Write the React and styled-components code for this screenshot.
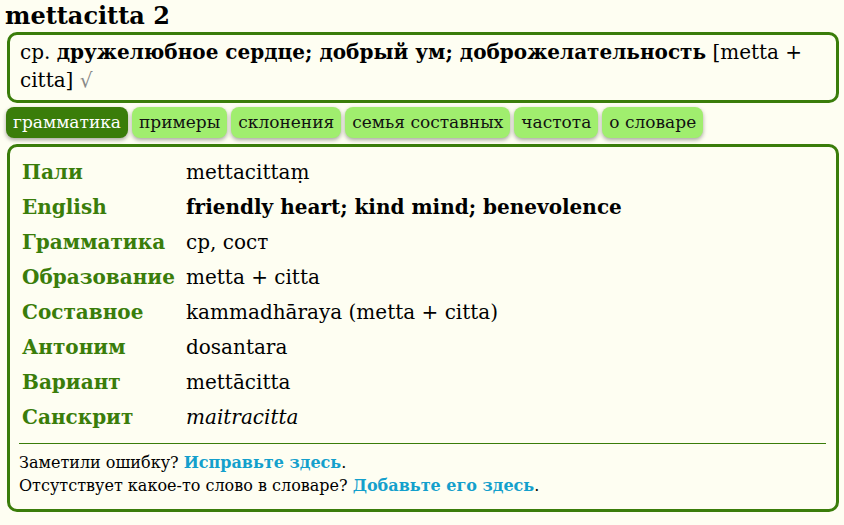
import React from 'react'
import styled, { createGlobalStyle } from 'styled-components'

const green = '#3a7d0a'
const light = '#a0ee6e'
const serif = '"DejaVu Serif", serif'

const Global = createGlobalStyle`
  html, body { background: #fefef2; }
  body {
    margin: 0;
    padding: 0 5px 0 7px;
    font-family: ${serif};
    color: #000;
  }
`

const Title = styled.div`
  font-family: ${serif};
  font-size: 24px;
  font-weight: bold;
  margin-left: -2px;
  line-height: 32px;
`

const Box = styled.div`
  border: 3px solid ${green};
  border-radius: 10px;
  background: #fefef2;
`

const Summary = styled(Box)`
  padding: 3px 10px 6px 10px;
  font-size: 20px;
  line-height: 28px;
  & .grey { color: #888; }
`

const Tabs = styled.div`
  display: flex;
  gap: 4px;
  margin: 4px 0 6px -1px;
`

const Tab = styled.div`
  height: 31px;
  line-height: 31px;
  padding: 0 7px;
  border-radius: 8px;
  font-size: 17px;
  background: ${p => (p.active ? green : light)};
  color: ${p => (p.active ? '#fff' : '#111')};
  box-shadow: 0 2px 4px rgba(0, 0, 0, 0.35);
`

const Main = styled(Box)`
  padding: 7px 10px 12px 12px;
`

const Table = styled.div`
  display: grid;
  grid-template-columns: 164px 1fr;
  grid-auto-rows: 35px;
  align-items: center;
  font-size: 20px;
`

const Label = styled.div`
  color: ${green};
  font-weight: bold;
  white-space: nowrap;
`

const Value = styled.div`
  font-weight: ${p => (p.bold ? 'bold' : 'normal')};
  font-style: ${p => (p.italic ? 'italic' : 'normal')};
`

const Rule = styled.hr`
  border: 0;
  border-top: 1px solid ${green};
  margin: 9px 0 0 -3px;
  width: 807px;
`

const Foot = styled.div`
  font-size: 16px;
  line-height: 23px;
  padding-top: 7px;
  margin-left: -3px;
  a {
    color: #14a0cc;
    font-weight: bold;
    text-decoration: none;
  }
`

const rows = [
  ['Пали', 'mettacittaṃ'],
  ['English', 'friendly heart; kind mind; benevolence', 'bold'],
  ['Грамматика', 'ср, сост'],
  ['Образование', 'metta + citta'],
  ['Составное', 'kammadhāraya (metta + citta)'],
  ['Антоним', 'dosantara'],
  ['Вариант', 'mettācitta'],
  ['Санскрит', 'maitracitta', 'italic'],
]

const tabs = ['грамматика', 'примеры', 'склонения', 'семья составных', 'частота', 'о словаре']

export default function App() {
  return (
    <>
      <Global />
      <Title>mettacitta 2</Title>
      <Summary>
        ср. <b>дружелюбное сердце; добрый ум; доброжелательность</b> [metta + citta]{' '}
        <span className="grey">√</span>
      </Summary>
      <Tabs>
        {tabs.map((t, i) => (
          <Tab key={t} active={i === 0}>{t}</Tab>
        ))}
      </Tabs>
      <Main>
        <Table>
          {rows.map(([l, v, s]) => (
            <React.Fragment key={l}>
              <Label>{l}</Label>
              <Value bold={s === 'bold'} italic={s === 'italic'}>{v}</Value>
            </React.Fragment>
          ))}
        </Table>
        <Rule />
        <Foot>
          Заметили ошибку? <a href="#">Исправьте здесь</a>.<br />
          Отсутствует какое-то слово в словаре? <a href="#">Добавьте его здесь</a>.
        </Foot>
      </Main>
    </>
  )
}
